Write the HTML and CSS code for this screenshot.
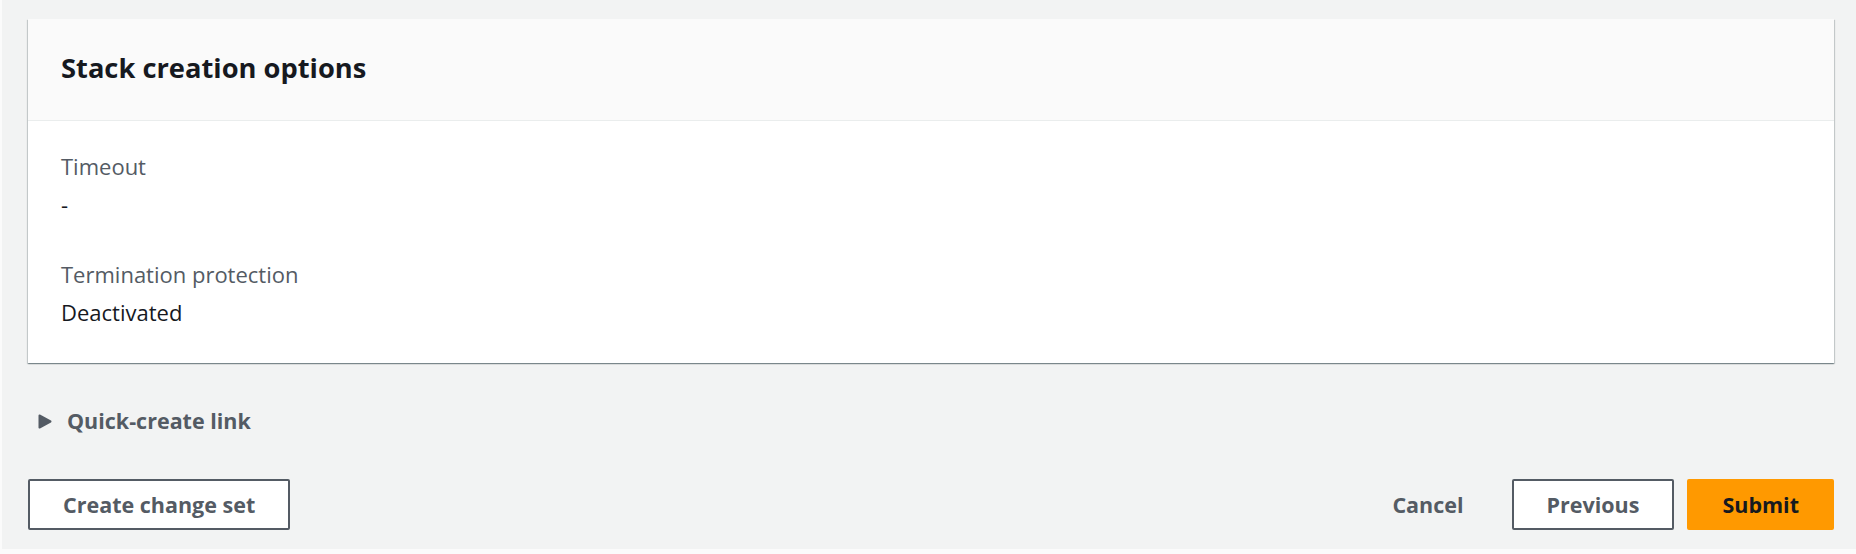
FILE: index.html
```html
<!DOCTYPE html>
<html lang="en">
<head>
<meta charset="utf-8">
<title>Stack creation options</title>
<link rel="stylesheet" href="styles.css">
</head>
<body>
<div class="page">
  <section class="card">
    <div class="card-header"><h2 class="card-title">Stack creation options</h2></div>
    <div class="card-body">
      <div class="kv">
        <div class="kv-label">Timeout</div>
        <div class="kv-value">-</div>
      </div>
      <div class="kv">
        <div class="kv-label">Termination protection</div>
        <div class="kv-value">Deactivated</div>
      </div>
    </div>
  </section>
  <div class="expander">
    <svg class="caret" width="14" height="15" viewBox="0 0 14 15"><path d="M1.5 1.5 L12.5 7.5 L1.5 13.5 Z" fill="#545b64" stroke="#545b64" stroke-width="2" stroke-linejoin="round"/></svg>
    <span class="expander-label">Quick-create link</span>
  </div>
  <div class="actions">
    <button class="btn btn-normal">Create change set</button>
    <div class="actions-right">
      <button class="btn btn-link">Cancel</button>
      <button class="btn btn-normal">Previous</button>
      <button class="btn btn-primary">Submit</button>
    </div>
  </div>
</div>
</body>
</html>
```

FILE: styles.css
```css
html, body {
  margin: 0;
  padding: 0;
  background: #fbfbfb;
}
body {
  font-family: "Open Sans", "Liberation Sans", sans-serif;
  color: #16191f;
}
.page {
  box-sizing: border-box;
  height: 549px;
  margin-left: 2px;
  padding: 19px 22px 0 26px;
  background: #f2f3f3;
}
.card {
  background: #ffffff;
  box-shadow: 0 1px 1px 0 rgba(0, 28, 36, 0.3), 1px 1px 1px 0 rgba(0, 28, 36, 0.15), -1px 1px 1px 0 rgba(0, 28, 36, 0.15);
}
.card-header {
  background: #fafafa;
  border-bottom: 1px solid #eaeded;
  padding: 29px 33px 32px;
}
.card-title {
  margin: 0;
  font-size: 27.3px;
  line-height: 40px;
  font-weight: 700;
  color: #16191f;
}
.card-body {
  padding: 26px 33px 32px;
  display: flex;
  flex-direction: column;
  gap: 32px;
}
.kv-label {
  font-size: 22px;
  line-height: 38px;
  color: #545b64;
}
.kv-value {
  font-size: 22px;
  line-height: 38px;
  color: #16191f;
}
.expander {
  margin-top: 43px;
  display: flex;
  align-items: center;
  gap: 15px;
  padding-left: 10px;
  height: 30px;
}
.caret {
  display: block;
}
.expander-label {
  font-size: 21.5px;
  line-height: 30px;
  font-weight: 700;
  color: #545b64;
}
.actions {
  margin-top: 43px;
  display: flex;
  justify-content: space-between;
  align-items: center;
}
.actions-right {
  display: flex;
  gap: 13px;
}
.btn {
  font-family: inherit;
  font-size: 21.5px;
  line-height: 27px;
  font-weight: 700;
  padding: 10px 33px;
  border: 2px solid #545b64;
  border-radius: 2px;
  background: #ffffff;
  color: #545b64;
  margin: 0;
}
.btn-link {
  background: transparent;
  border-color: transparent;
}
.btn-primary {
  background: #ff9900;
  border-color: #ff9900;
  color: #16191f;
}
```
